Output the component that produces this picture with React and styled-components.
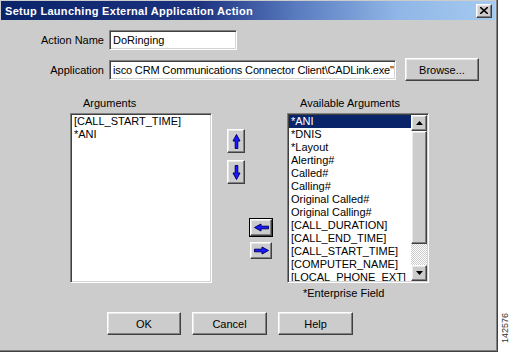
import React from 'react';
import styled, { createGlobalStyle, css } from 'styled-components';

const GlobalStyle = createGlobalStyle`
  html, body {
    margin: 0;
    padding: 0;
    background: #ffffff;
  }
  body {
    font-family: "Liberation Sans", Arial, sans-serif;
    font-size: 11px;
    color: #000000;
  }
`;

const argumentsList = ['[CALL_START_TIME]', '*ANI'];

const availableList = [
  '*ANI',
  '*DNIS',
  '*Layout',
  'Alerting#',
  'Called#',
  'Calling#',
  'Original Called#',
  'Original Calling#',
  '[CALL_DURATION]',
  '[CALL_END_TIME]',
  '[CALL_START_TIME]',
  '[COMPUTER_NAME]',
  '[LOCAL_PHONE_EXT]',
];

function ArrowIcon({ dir }) {
  const rot = { up: 0, down: 180, left: 270, right: 90 }[dir];
  return (
    <svg width="9" height="15" viewBox="0 0 9 15" style={{ transform: `rotate(${rot}deg)` }}>
      <path
        d="M4.5 0.5 L8 7 L5.8 7 L5.8 14.5 L3.2 14.5 L3.2 7 L1 7 Z"
        fill="#1a1aff"
        stroke="#00006a"
        strokeWidth="1"
      />
    </svg>
  );
}

function ScrollArrow({ dir }) {
  return (
    <svg width="7" height="4" viewBox="0 0 7 4">
      {dir === 'up' ? <path d="M3.5 0 L7 4 L0 4 Z" fill="#000" /> : <path d="M0 0 L7 0 L3.5 4 Z" fill="#000" />}
    </svg>
  );
}

export default function App() {
  return (
    <>
      <GlobalStyle />
      <Page>
        <Window>
          <TitleBar>
            <Title>Setup Launching External Application Action</Title>
            <CloseButton>
              <svg width="8" height="7" viewBox="0 0 8 7">
                <path d="M0 0 L8 7 M8 0 L0 7" stroke="#000" strokeWidth="1.6" />
              </svg>
            </CloseButton>
          </TitleBar>

          <Body>
            <FieldRow>
              <FieldLabel>Action Name</FieldLabel>
              <TextBox $width={128}>DoRinging</TextBox>
            </FieldRow>

            <FieldRow $gap={8}>
              <FieldLabel>Application</FieldLabel>
              <TextBox $width={287} $tight>isco CRM Communications Connector Client\CADLink.exe"</TextBox>
              <PushButton $width={74} $ml={9}>Browse...</PushButton>
            </FieldRow>

            <ListArea>
              <ListCaption>Arguments</ListCaption>
              <span />
              <ListCaption>Available Arguments</ListCaption>

              <ListBox>
                <Items>
                  {argumentsList.map((a) => (
                    <Item key={a}>{a}</Item>
                  ))}
                </Items>
              </ListBox>

              <MoveColumn>
                <MoveButton $dir="vert" $mt={16}>
                  <ArrowIcon dir="up" />
                </MoveButton>
                <MoveButton $dir="vert" $mt={7}>
                  <ArrowIcon dir="down" />
                </MoveButton>
                <MoveButton $dir="horiz" $mt={35} $focused>
                  <ArrowIcon dir="left" />
                </MoveButton>
                <MoveButton $dir="horiz" $mt={6}>
                  <ArrowIcon dir="right" />
                </MoveButton>
              </MoveColumn>

              <ListBox>
                <Items>
                  {availableList.map((a, i) => (
                    <Item key={a} $selected={i === 0}>
                      {a}
                    </Item>
                  ))}
                </Items>
                <ScrollBar>
                  <ScrollButton>
                    <ScrollArrow dir="up" />
                  </ScrollButton>
                  <Thumb />
                  <Track />
                  <ScrollButton>
                    <ScrollArrow dir="down" />
                  </ScrollButton>
                </ScrollBar>
              </ListBox>

              <span />
              <span />
              <Note>*Enterprise Field</Note>
            </ListArea>

            <ButtonRow>
              <PushButton $width={74}>OK</PushButton>
              <PushButton $width={75}>Cancel</PushButton>
              <PushButton $width={75}>Help</PushButton>
            </ButtonRow>
          </Body>
        </Window>

        <Side>
          <FigureId>142576</FigureId>
        </Side>
      </Page>
    </>
  );
}

const raised = css`
  border-top: 1px solid #ffffff;
  border-left: 1px solid #ffffff;
  border-right: 1px solid #404040;
  border-bottom: 1px solid #404040;
  box-shadow: inset -1px -1px 0 #808080, inset 1px 1px 0 #e8e8e8;
`;

const sunken = css`
  border-top: 1px solid #808080;
  border-left: 1px solid #808080;
  border-right: 1px solid #ffffff;
  border-bottom: 1px solid #ffffff;
  box-shadow: inset 1px 1px 0 #404040, inset -1px -1px 0 #d4d4d4;
`;

const Page = styled.div`
  display: flex;
  width: 511px;
  height: 354px;
  background: #ffffff;
`;

const Window = styled.div`
  box-sizing: border-box;
  width: 498px;
  height: 352px;
  background: #cccccc;
  border-right: 1px solid #404040;
  border-bottom: 1px solid #404040;
  box-shadow: inset -1px -1px 0 #808080;
  display: flex;
  flex-direction: column;
`;

const TitleBar = styled.div`
  height: 19px;
  margin: 1px 2px 0 1px;
  background: linear-gradient(90deg, #0a246a 0%, #1c3280 40%, #5a7cc0 60%, #8fb6e6 80%, #a6caf0 100%);
  display: flex;
  align-items: center;
  justify-content: space-between;
  padding: 0 3px 0 4px;
`;

const Title = styled.div`
  color: #ffffff;
  font-weight: bold;
  font-size: 11px;
  letter-spacing: 0.3px;
`;

const CloseButton = styled.div`
  box-sizing: border-box;
  width: 16px;
  height: 14px;
  background: #cccccc;
  ${raised};
  display: flex;
  align-items: center;
  justify-content: center;
`;

const Body = styled.div`
  display: flex;
  flex-direction: column;
  padding-top: 10px;
`;

const FieldRow = styled.div`
  display: flex;
  align-items: center;
  margin-top: ${(p) => p.$gap || 0}px;
`;

const FieldLabel = styled.div`
  width: 104px;
  text-align: right;
  margin-right: 5px;
`;

const TextBox = styled.div`
  box-sizing: border-box;
  width: ${(p) => p.$width}px;
  height: 20px;
  background: #ffffff;
  ${sunken};
  padding: 0 2px 0 3px;
  display: flex;
  align-items: center;
  white-space: nowrap;
  overflow: hidden;
  letter-spacing: ${(p) => (p.$tight ? '-0.15px' : '0')};
`;

const PushButton = styled.div`
  box-sizing: border-box;
  width: ${(p) => p.$width}px;
  height: 23px;
  margin-left: ${(p) => p.$ml || 0}px;
  background: #cccccc;
  ${raised};
  display: flex;
  align-items: center;
  justify-content: center;
`;

const ListArea = styled.div`
  display: grid;
  grid-template-columns: 142px 75px 142px;
  grid-template-rows: 16px 170px 17px;
  margin: 16px 0 0 70px;
`;

const ListCaption = styled.div`
  padding-left: 13px;
  line-height: 13px;
`;

const ListBox = styled.div`
  box-sizing: border-box;
  background: #ffffff;
  ${sunken};
  padding: 1px;
  display: flex;
  overflow: hidden;
`;

const Items = styled.div`
  flex: 1;
  overflow: hidden;
`;

const Item = styled.div`
  height: 13px;
  line-height: 13px;
  padding-left: 2px;
  white-space: nowrap;
  background: ${(p) => (p.$selected ? '#0a246a' : 'transparent')};
  color: ${(p) => (p.$selected ? '#ffffff' : '#000000')};
`;

const ScrollBar = styled.div`
  width: 16px;
  display: flex;
  flex-direction: column;
`;

const ScrollButton = styled.div`
  box-sizing: border-box;
  height: 16px;
  background: #cccccc;
  ${raised};
  display: flex;
  align-items: center;
  justify-content: center;
`;

const Thumb = styled.div`
  box-sizing: border-box;
  height: 113px;
  background: #cccccc;
  ${raised};
`;

const Track = styled.div`
  flex: 1;
  background-color: #ffffff;
  background-image: repeating-conic-gradient(#cccccc 0 25%, #ffffff 0 50%);
  background-size: 2px 2px;
`;

const MoveColumn = styled.div`
  display: flex;
  flex-direction: column;
  align-items: flex-start;
`;

const MoveButton = styled.div`
  box-sizing: border-box;
  margin-top: ${(p) => p.$mt}px;
  margin-left: ${(p) => (p.$dir === 'vert' ? 15 : 38)}px;
  width: ${(p) => (p.$dir === 'vert' ? 18 : 22)}px;
  height: ${(p) => (p.$dir === 'vert' ? 24 : 17)}px;
  background: #cccccc;
  ${raised};
  ${(p) => p.$focused && css`outline: 1px solid #000000;`}
  display: flex;
  align-items: center;
  justify-content: center;
`;

const Note = styled.div`
  padding: 4px 0 0 16px;
  line-height: 13px;
`;

const ButtonRow = styled.div`
  display: flex;
  gap: 11px;
  margin: 12px 0 0 107px;
`;

const Side = styled.div`
  flex: 1;
  display: flex;
  align-items: flex-end;
  justify-content: center;
  padding-bottom: 11px;
`;

const FigureId = styled.div`
  writing-mode: vertical-rl;
  transform: rotate(180deg);
  font-size: 9px;
  color: #333333;
`;
